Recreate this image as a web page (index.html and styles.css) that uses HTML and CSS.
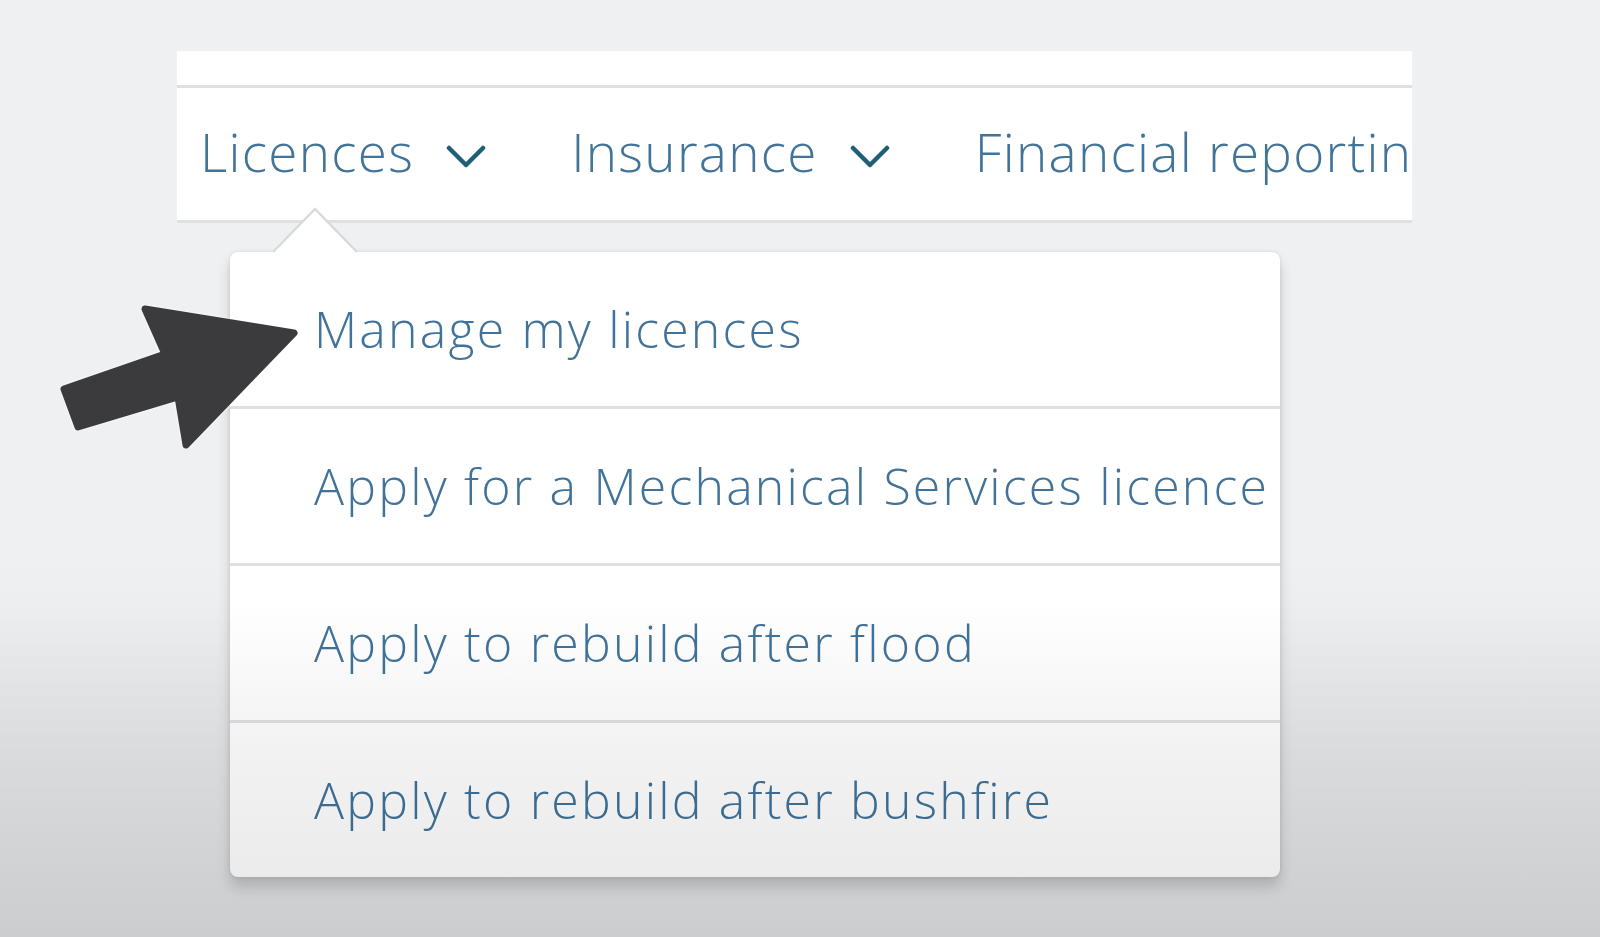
FILE: index.html
```html
<!DOCTYPE html>
<html lang="en">
<head>
<meta charset="utf-8">
<title>Licences menu</title>
<link rel="stylesheet" href="styles.css">
</head>
<body>
<div class="stage">
  <header class="site-header">
    <div class="top-strip"></div>
    <nav class="main-nav">
      <a class="nav-item" href="#">
        <span class="nav-label">Licences</span>
        <svg class="chev" viewBox="0 0 40 25" width="40" height="25"><polyline points="3,4 20,21 37,4"/></svg>
      </a>
      <a class="nav-item" href="#">
        <span class="nav-label">Insurance</span>
        <svg class="chev" viewBox="0 0 40 25" width="40" height="25"><polyline points="3,4 20,21 37,4"/></svg>
      </a>
      <a class="nav-item" href="#">
        <span class="nav-label">Financial reporting</span>
      </a>
    </nav>
  </header>

  <div class="dropdown">
    <svg class="caret" viewBox="0 0 84 46" width="84" height="46">
      <polygon points="0,46 42,2 84,46" fill="#ffffff"/>
      <polyline points="0,45 42,2 84,45" fill="none" stroke="#d9dadc" stroke-width="2.5"/>
    </svg>
    <ul class="menu">
      <li class="menu-item"><a href="#">Manage my licences</a></li>
      <li class="menu-item"><a href="#">Apply for a Mechanical Services licence</a></li>
      <li class="menu-item"><a href="#">Apply to rebuild after flood</a></li>
      <li class="menu-item"><a href="#">Apply to rebuild after bushfire</a></li>
    </ul>
  </div>

  <div class="vignette"></div>

  <svg class="pointer-arrow" viewBox="0 0 1600 937" width="1600" height="937">
    <polygon points="294,333 145,309 165,354 64,389 78,427 178,397 186,445"
      fill="#3b3a3c" stroke="#3b3a3c" stroke-width="7" stroke-linejoin="round"/>
  </svg>
</div>
</body>
</html>
```

FILE: styles.css
```css
* { box-sizing: border-box; }

html, body {
  margin: 0;
  padding: 0;
  width: 1600px;
  height: 937px;
  overflow: hidden;
}

body {
  background: #eff0f2;
  font-family: "Open Sans", "Noto Sans", "Liberation Sans", sans-serif;
  color: #3a6b88;
}

.stage {
  position: relative;
  width: 1600px;
  height: 937px;
  padding: 51px 188px 0 177px;
  background: linear-gradient(to bottom, #eff0f2 0%, #eff0f2 60%, #e6e7e9 80%, #e0e1e3 100%);
}

.site-header {
  width: 1235px;
}

.top-strip {
  height: 37px;
  background: #ffffff;
  border-bottom: 3px solid #dfe0e2;
}

.main-nav {
  height: 135px;
  background: #ffffff;
  border-bottom: 3px solid #dfe0e2;
  display: flex;
  align-items: center;
  gap: 85px;
  padding: 0 0 6px 23px;
  overflow: hidden;
  white-space: nowrap;
}

.nav-item {
  display: flex;
  align-items: center;
  gap: 32px;
  text-decoration: none;
  color: #42749a;
  font-size: 53px;
  font-weight: 300;
  letter-spacing: 1.3px;
  flex-shrink: 0;
}

.nav-label {
  line-height: 1;
}

.chev {
  display: block;
  margin-top: 10px;
}

.chev polyline {
  fill: none;
  stroke: #1f5f76;
  stroke-width: 4.5;
  stroke-linecap: round;
  stroke-linejoin: round;
}

.dropdown {
  position: relative;
  width: 1050px;
  margin: 29px 0 0 53px;
}

.caret {
  position: absolute;
  left: 43px;
  top: -45px;
  display: block;
  z-index: 2;
}

.menu {
  list-style: none;
  margin: 0;
  padding: 0;
  background: #ffffff;
  border-radius: 8px;
  box-shadow: 0 10px 14px rgba(0, 0, 0, 0.16), 0 0 4px rgba(0, 0, 0, 0.10);
  overflow: hidden;
}

.menu-item {
  height: 157px;
  display: flex;
  align-items: center;
  padding-left: 84px;
}

.menu-item:first-child {
  height: 154px;
}

.menu-item + .menu-item {
  border-top: 3px solid #e0e0e2;
}

.menu-item a {
  font-size: 50px;
  font-weight: 300;
  letter-spacing: 2.2px;
  color: #40729a;
  text-decoration: none;
  line-height: 1;
  white-space: nowrap;
}

.vignette {
  position: absolute;
  inset: 0;
  pointer-events: none;
  background: linear-gradient(to bottom, rgba(0,0,0,0) 0%, rgba(0,0,0,0) 64%, rgba(0,0,0,0.05) 80%, rgba(0,0,0,0.09) 100%);
  z-index: 3;
}

.pointer-arrow {
  position: absolute;
  left: 0;
  top: 0;
  pointer-events: none;
  z-index: 4;
  filter: drop-shadow(0 0 1.5px rgba(255, 255, 255, 0.9));
}
```
